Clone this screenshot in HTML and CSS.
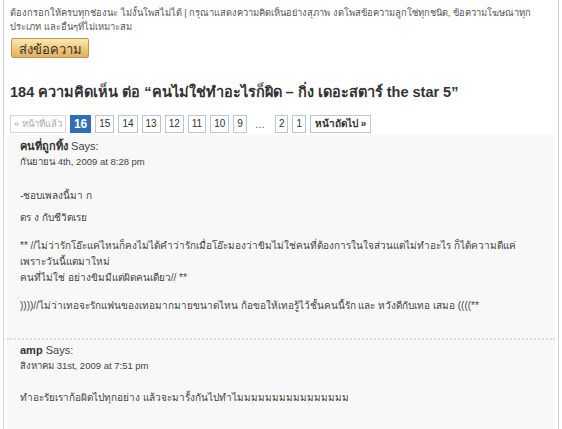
FILE: index.html
```html
<!DOCTYPE html>
<html lang="th">
<head>
  <meta charset="UTF-8">
  <title>ความคิดเห็น</title>
  <link rel="stylesheet" href="styles.css">
</head>
<body>
  <div class="page">
    <p class="notice">ต้องกรอกให้ครบทุกช่องนะ ไม่งั้นโพสไม่ได้ | กรุณาแสดงความคิดเห็นอย่างสุภาพ งดโพสข้อความลูกโซ่ทุกชนิด, ข้อความโฆษณาทุกประเภท และอื่นๆที่ไม่เหมาะสม</p>
    <button type="button" class="send">ส่งข้อความ</button>

    <h3 class="count">184 ความคิดเห็น ต่อ “คนไม่ใช่ทำอะไรก็ผิด – กิ่ง เดอะสตาร์ the star 5”</h3>

    <div class="pager">
      <span class="pg off">« หน้าที่แล้ว</span>
      <span class="pg cur">16</span>
      <a class="pg" href="#">15</a>
      <a class="pg" href="#">14</a>
      <a class="pg" href="#">13</a>
      <a class="pg" href="#">12</a>
      <a class="pg" href="#">11</a>
      <a class="pg" href="#">10</a>
      <a class="pg" href="#">9</a>
      <span class="dots">…</span>
      <a class="pg" href="#">2</a>
      <a class="pg" href="#">1</a>
      <a class="pg next" href="#">หน้าถัดไป »</a>
    </div>

    <ol class="comments">
      <li class="comment">
        <div class="who"><b>คนที่ถูกทิ้ง</b> Says:</div>
        <div class="when">กันยายน 4th, 2009 at 8:28 pm</div>
        <p class="first">-ชอบเพลงนี้มา ก</p>
        <p class="tight">ตร ง กับชีวิตเรย</p>
        <p>** //ไม่ว่ารักโอ๊ะแค่ไหนก็คงไม่ได้คำว่ารักเมื่อโอ๊ะมองว่าขิมไม่ใช่คนที่ต้องการในใจส่วนแตไม่ทำอะไร ก็ได้ความดีแค่เพราะวันนี้แตมาใหม่<br>คนที่ไม่ใช่ อย่างขิมมีแต่ผิดคนเดียว// **</p>
        <p>))))//ไม่ว่าเทอจะรักแฟนของเทอมากมายขนาดไหน ก้อขอให้เทอรู้ไว้ชั้นคนนี้รัก และ หวังดีกับเทอ เสมอ ((((**</p>
      </li>
      <li class="comment">
        <div class="who"><b>amp</b> Says:</div>
        <div class="when">สิงหาคม 31st, 2009 at 7:51 pm</div>
        <p class="first">ทำอะรัยเราก้อผิดไปทุกอย่าง แล้วจะมารั้งกันไปทำไมมมมมมมมมมมมมมมม</p>
      </li>
    </ol>
  </div>
</body>
</html>
```

FILE: styles.css
```css
body {
  margin: 0;
  background-color: #fff;
  font-family: Tahoma, "Liberation Sans", "Noto Sans", sans-serif;
  color: #555;
}
.page {
  margin: 0 3px;
  padding: 6px 6px 0;
  border-left: 1px solid #c9d3dd;
  border-right: 1px solid #c9d3dd;
  min-height: 429px;
  box-sizing: border-box;
}
.notice {
  margin: 0;
  font-size: 9.3px;
  line-height: 14px;
  color: #555;
}
.send {
  margin: 4px 0 0 1px;
  width: 78px;
  height: 20px;
  padding: 0;
  font-family: inherit;
  font-size: 13px;
  color: #333;
  background: linear-gradient(#fdeab4, #f0c878 55%, #e2b060);
  border: 1px solid #c09550;
  border-radius: 2px;
}
.count {
  margin: 22px 0 12px;
  font-size: 14.5px;
  font-weight: bold;
  color: #333;
}
.pager {
  display: flex;
  align-items: center;
  gap: 4px;
  font-size: 10px;
}
.pg {
  display: inline-block;
  height: 16px;
  line-height: 16px;
  padding: 0 3px;
  border: 1px solid #b6c6de;
  color: #333;
  text-decoration: none;
}
.pg.off {
  padding: 0 3px;
  font-size: 9.5px;
  color: #aaa;
  border-color: #d6d6d6;
}
.pg.cur {
  background-color: #2f6db4;
  border-color: #2f6db4;
  color: #fff;
  font-weight: bold;
  font-size: 12px;
}
.pg.next {
  padding: 0 4px;
  font-weight: bold;
}
.dots {
  padding: 0 6px 0 4px;
  color: #555;
}
.comments {
  list-style: none;
  margin: 2px -3px 0;
  padding: 0;
}
.comment {
  background-color: #f8f8f8;
  padding: 3px 28px 24px 13px;
  font-size: 10px;
  color: #444;
}
.comment + .comment {
  border-top: 2px dotted #ddd;
  padding-top: 2px;
  padding-bottom: 40px;
}
.who {
  font-size: 11px;
  line-height: 16px;
  color: #444;
}
.who b {
  color: #333;
}
.when {
  font-size: 9.5px;
  line-height: 16px;
}
.comment p {
  margin: 12px 0 0;
  line-height: 16px;
}
.comment p.first {
  margin-top: 18px;
}
.comment + .comment p.first {
  margin-top: 16px;
}
.comment p.tight {
  margin-top: 6px;
}
```
